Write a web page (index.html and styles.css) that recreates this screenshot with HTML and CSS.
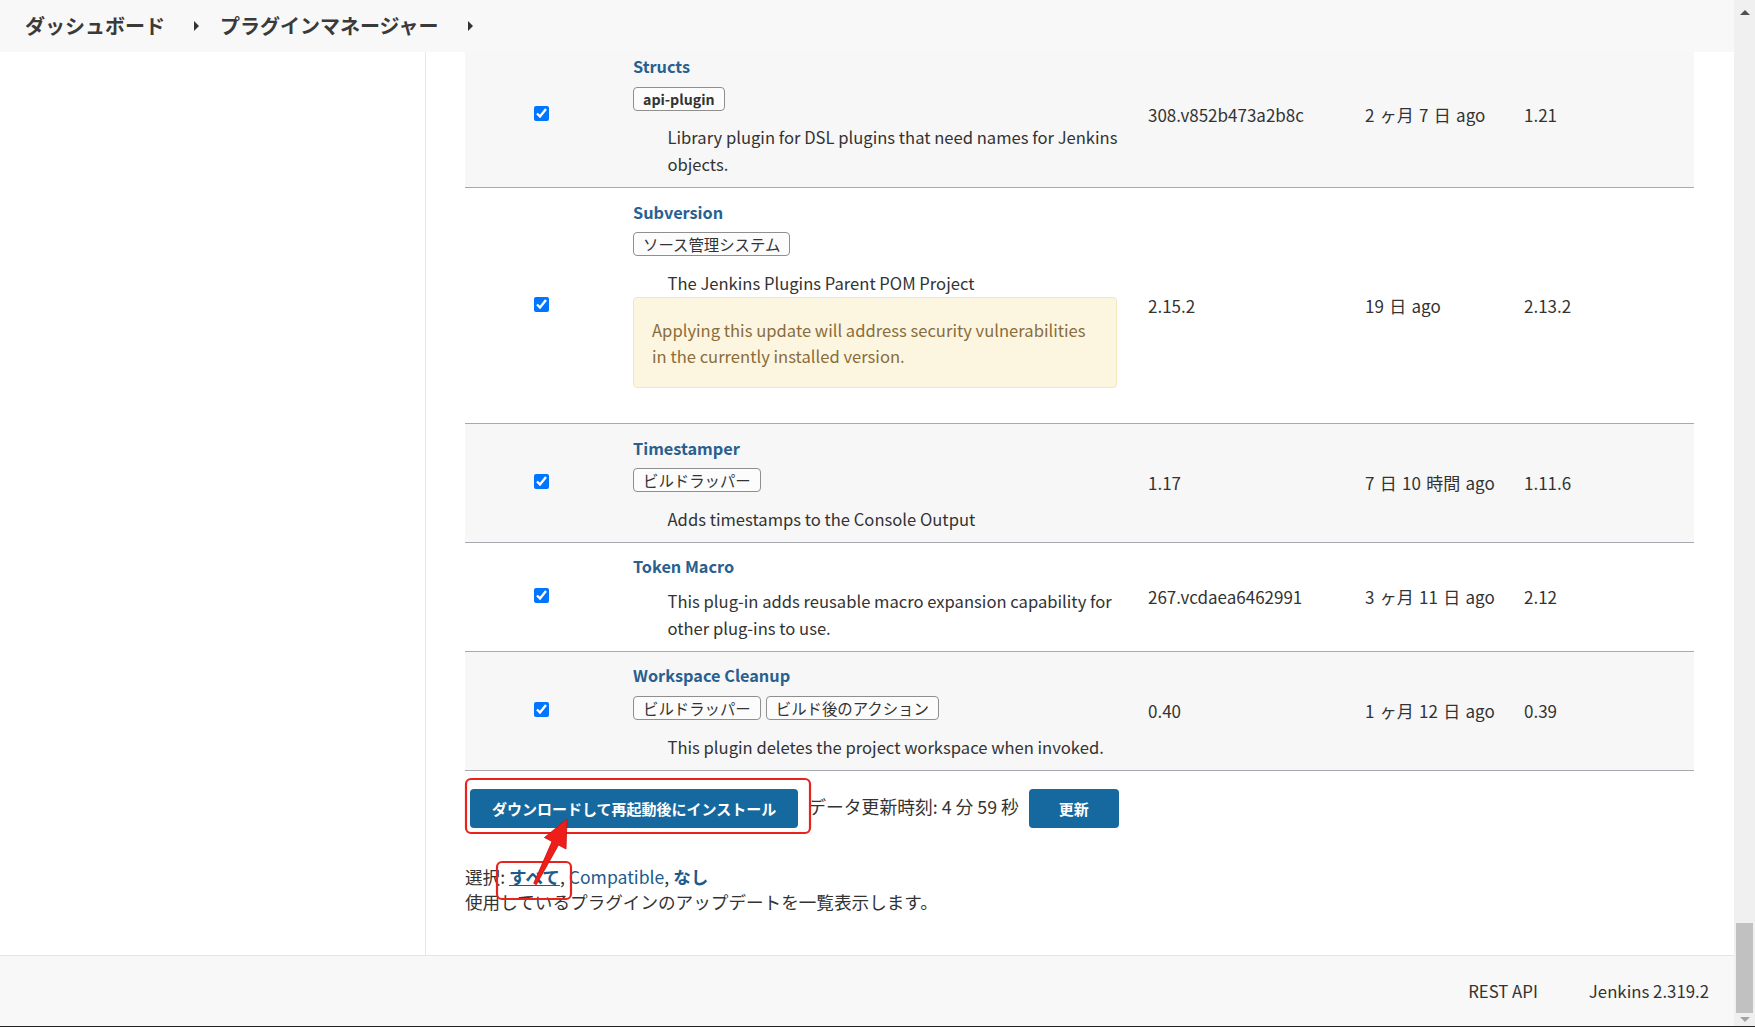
FILE: index.html
```html
<!DOCTYPE html>
<html lang="ja">
<head>
<meta charset="utf-8">
<title>プラグインマネージャー</title>
<link rel="stylesheet" href="styles.css">
</head>
<body>
<div class="window">
  <div class="page">
    <header class="topbar">
      <span class="crumb">ダッシュボード</span><span class="sep"></span>
      <span class="crumb">プラグインマネージャー</span><span class="sep"></span>
    </header>
    <div class="main">
      <aside class="side"></aside>
      <section class="content">
        <div class="plugins">
          <div class="row odd">
            <div class="c-check"><input type="checkbox" checked></div>
            <div class="c-name">
              <a class="pname">Structs</a>
              <div class="tags"><span class="tag tag-en">api-plugin</span></div>
              <div class="desc">Library plugin for DSL plugins that need names for Jenkins<br>objects.</div>
            </div>
            <div class="cell">308.v852b473a2b8c</div>
            <div class="cell">2 ヶ月 7 日 ago</div>
            <div class="cell">1.21</div>
          </div>
          <div class="row">
            <div class="c-check"><input type="checkbox" checked></div>
            <div class="c-name">
              <a class="pname">Subversion</a>
              <div class="tags"><span class="tag">ソース管理システム</span></div>
              <div class="desc">The Jenkins Plugins Parent POM Project</div>
              <div class="alert">Applying this update will address security vulnerabilities<br>in the currently installed version.</div>
            </div>
            <div class="cell">2.15.2</div>
            <div class="cell">19 日 ago</div>
            <div class="cell">2.13.2</div>
          </div>
          <div class="row odd">
            <div class="c-check"><input type="checkbox" checked></div>
            <div class="c-name">
              <a class="pname">Timestamper</a>
              <div class="tags"><span class="tag">ビルドラッパー</span></div>
              <div class="desc">Adds timestamps to the Console Output</div>
            </div>
            <div class="cell">1.17</div>
            <div class="cell">7 日 10 時間 ago</div>
            <div class="cell">1.11.6</div>
          </div>
          <div class="row">
            <div class="c-check"><input type="checkbox" checked></div>
            <div class="c-name">
              <a class="pname">Token Macro</a>
              <div class="desc">This plug-in adds reusable macro expansion capability for<br>other plug-ins to use.</div>
            </div>
            <div class="cell">267.vcdaea6462991</div>
            <div class="cell">3 ヶ月 11 日 ago</div>
            <div class="cell">2.12</div>
          </div>
          <div class="row odd">
            <div class="c-check"><input type="checkbox" checked></div>
            <div class="c-name">
              <a class="pname">Workspace Cleanup</a>
              <div class="tags"><span class="tag">ビルドラッパー</span><span class="tag">ビルド後のアクション</span></div>
              <div class="desc">This plugin deletes the project workspace when invoked.</div>
            </div>
            <div class="cell">0.40</div>
            <div class="cell">1 ヶ月 12 日 ago</div>
            <div class="cell">0.39</div>
          </div>
        </div>
        <div class="actions">
          <button class="btn">ダウンロードして再起動後にインストール</button>
          <span class="updated">データ更新時刻: 4 分 59 秒</span>
          <button class="btn btn-small">更新</button>
        </div>
        <div class="select">選択: <a class="lnk b u">すべて</a>, <a class="lnk">Compatible</a>, <a class="lnk b">なし</a></div>
        <div class="hint">使用しているプラグインのアップデートを一覧表示します。</div>
      </section>
    </div>
    <footer class="footer">
      <span>REST API</span>
      <span>Jenkins 2.319.2</span>
    </footer>
  </div>
  <div class="scrollbar">
    <div class="sb-up"><span class="tri-up"></span></div>
    <div class="sb-track"><div class="sb-thumb"></div></div>
    <div class="sb-down"><span class="tri-down"></span></div>
  </div>
  <svg class="annot" width="1755" height="1027" viewBox="0 0 1755 1027" aria-hidden="true">
    <rect x="466" y="779" width="344" height="54" rx="5" ry="5" fill="none" stroke="#e8221d" stroke-width="2.2"/>
    <rect x="497" y="862" width="74" height="37" rx="5" ry="5" fill="none" stroke="#e8221d" stroke-width="2.2"/>
    <polygon points="567,819 566,849 558.5,845 536.3,884.7 533.7,883.3 552,841.5 544.5,837.5" fill="#ee1f1b" stroke="#c8100c" stroke-width="0.8" stroke-linejoin="round"/>
  </svg>
</div>
</body>
</html>
```
FILE: styles.css
```css
* { box-sizing: border-box; }
html, body { margin: 0; padding: 0; height: 100%; }
body {
  font-family: "Noto Sans CJK JP", "Noto Sans", sans-serif;
  color: #333;
  background: #fff;
  overflow: hidden;
}
.window {
  position: relative;
  display: flex;
  height: 1027px;
  border-bottom: 1px solid #222;
}
.page {
  flex: 1;
  display: flex;
  flex-direction: column;
  min-width: 0;
}
.topbar {
  height: 52px;
  flex-shrink: 0;
  background: #f8f8f8;
  display: flex;
  align-items: center;
  padding-left: 25px;
}
.crumb {
  font-size: 20px;
  font-weight: 700;
  line-height: 1;
  color: #3a3a3a;
}
.sep {
  width: 0;
  height: 0;
  border-left: 5px solid #333;
  border-top: 5px solid transparent;
  border-bottom: 5px solid transparent;
  margin: 0 21px 0 29px;
}
.main {
  flex: 1;
  display: flex;
  min-height: 0;
  overflow: hidden;
}
.side {
  width: 426px;
  flex-shrink: 0;
  border-right: 1px solid #e8e8e8;
}
.content {
  flex: 1;
  min-width: 0;
  padding: 0 40px 0 39px;
}
.plugins { margin-top: -9.5px; }
.row {
  display: grid;
  grid-template-columns: 168px 515px 217px 159px 170px;
  align-items: center;
  padding: 11.5px 0 9px;
  border-bottom: 1px solid #a6aaae;
}
.row.odd { background: #f7f7f7; }
.c-check {
  display: flex;
  padding-left: 69px;
  padding-bottom: 5px;
}
.c-check input {
  width: 15px;
  height: 15px;
  margin: 0;
  accent-color: #0075ff;
}
.c-name { align-self: start; }
.pname {
  display: block;
  font-size: 16.3px;
  line-height: 24px;
  font-weight: 600;
  color: #28608f;
  text-decoration: none;
}
.tags {
  display: flex;
  gap: 5px;
  margin: 8.5px 0 13.7px;
}
.tag {
  height: 24px;
  padding: 0 9px;
  border: 1px solid #8f8f8f;
  border-radius: 4px;
  background: #fcfcfc;
  font-size: 15.4px;
  line-height: 22px;
  color: #333;
}
.tag-en { font-weight: 600; font-size: 14.2px; }
.desc {
  margin-top: 9.5px;
  padding-left: 34.5px;
  font-size: 16.6px;
  line-height: 27px;
  white-space: nowrap;
}
.alert {
  margin: 0 31.5px 26.7px 0;
  padding: 19px 18px 17.7px;
  background: #fcf6e1;
  border: 1px solid #f4e7bf;
  border-radius: 4px;
  color: #8a6d3b;
  font-size: 16.6px;
  line-height: 26px;
  white-space: nowrap;
}
.cell {
  font-size: 17px;
  line-height: 24px;
  word-spacing: 1.5px;
  padding-bottom: 2px;
}
.actions {
  display: flex;
  align-items: center;
  margin-top: 18.6px;
  padding-left: 5px;
}
.btn {
  height: 39px;
  padding: 0 22px;
  border: none;
  border-radius: 4px;
  background: #16699f;
  color: #fff;
  font-family: inherit;
  font-size: 15px;
  font-weight: 700;
}
.btn-small { padding: 0 30px; }
.updated {
  margin: 0 10px 5px 10px;
  font-size: 17.8px;
  line-height: 24px;
}
.select {
  margin-top: 35.5px;
  font-size: 17.6px;
  line-height: 25.5px;
}
.hint {
  font-size: 17.6px;
  line-height: 25.5px;
}
.lnk {
  color: #1d5b8c;
  text-decoration: none;
}
.lnk.b { font-weight: 700; }
.lnk.u { text-decoration: underline; }
.footer {
  height: 71px;
  flex-shrink: 0;
  background: #f8f8f8;
  border-top: 1px solid #e4e4e4;
  display: flex;
  justify-content: flex-end;
  align-items: center;
  gap: 51px;
  padding-right: 25px;
  font-size: 16.8px;
  color: #333;
}
.scrollbar {
  width: 21px;
  flex-shrink: 0;
  background: #f0f0f0;
  display: flex;
  flex-direction: column;
  align-items: center;
}
.sb-up {
  height: 24px;
  display: flex;
  align-items: center;
  justify-content: center;
}
.tri-up {
  width: 0; height: 0;
  border-left: 5px solid transparent;
  border-right: 5px solid transparent;
  border-bottom: 5px solid #505050;
}
.sb-track {
  flex: 1;
  width: 100%;
  display: flex;
  flex-direction: column;
  justify-content: flex-end;
  align-items: center;
}
.sb-thumb {
  width: 17px;
  height: 90px;
  background: #c1c1c1;
}
.sb-down {
  height: 13px;
  display: flex;
  align-items: center;
  justify-content: center;
}
.tri-down {
  width: 0; height: 0;
  border-left: 5px solid transparent;
  border-right: 5px solid transparent;
  border-top: 5px solid #a3a3a3;
}
.annot {
  position: absolute;
  left: 0;
  top: 0;
  pointer-events: none;
}
```
